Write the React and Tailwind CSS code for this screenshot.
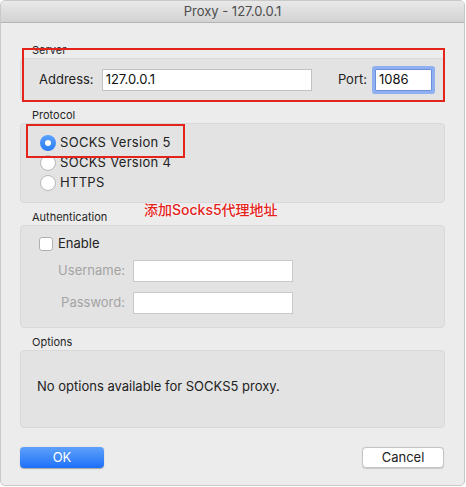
import React from "react";

const font = { fontFamily: "Inter, 'Noto Sans', 'Noto Sans CJK SC', sans-serif" };

const GroupLabel = ({ children }) => (
    <div className="h-[14px] pl-[12px] mb-[1px] text-[11px] leading-[14px] text-[#262626]">{children}</div>
);

const Radio = ({ checked, label }) => (
    <div className="flex items-center h-[20px]">
        {checked ? (
            <span className="w-[16px] h-[16px] rounded-full bg-gradient-to-b from-[#5aa2ff] to-[#2a7cf6] flex items-center justify-center">
                <span className="w-[6px] h-[6px] rounded-full bg-white" />
            </span>
        ) : (
            <span className="w-[16px] h-[16px] rounded-full bg-white border border-[#b8b8b8]" />
        )}
        <span className="ml-[4px] text-[13px] tracking-[0.3px] text-[#222]">{label}</span>
    </div>
);

export default function App() {
    return (
        <div className="w-[466px] h-[487px] bg-white" style={font}>
            <div className="relative w-[465px] h-[486px] bg-[#ececec] rounded-[5px] border border-[#c9c9c9] overflow-hidden flex flex-col">
                <div className="h-[22px] shrink-0 bg-gradient-to-b from-[#e9e9e9] to-[#d2d2d2] border-b border-[#b4b4b4] flex items-center justify-center text-[13px] text-[#4d4d4d]">
                    Proxy - 127.0.0.1
                </div>

                <div className="px-[19px] pt-[20px] flex flex-col">
                    {/* Server */}
                    <GroupLabel>Server</GroupLabel>
                    <div className="h-[43px] bg-[#e3e3e3] border border-[#d9d9d9] rounded-[4px] flex items-center pl-[18px] pr-[12px]">
                        <span className="text-[13px] text-[#222]">Address:</span>
                        <div className="ml-[8px] w-[210px] h-[22px] bg-white border border-[#c2c2c2] flex items-center px-[3px] text-[13px] text-[#111]">127.0.0.1</div>
                        <span className="ml-auto text-[13px] text-[#222]">Port:</span>
                        <div className="ml-[8px] w-[57px] h-[22px] bg-white border border-[#6b8fdc] ring-[3px] ring-[#8fb0f0] rounded-[1px] flex items-center px-[3px] text-[13px] text-[#111]">1086</div>
                    </div>

                    {/* Protocol */}
                    <div className="mt-[7px]">
                        <GroupLabel>Protocol</GroupLabel>
                    </div>
                    <div className="h-[80px] bg-[#e3e3e3] border border-[#d9d9d9] rounded-[4px] pl-[19px] pt-[9px]">
                        <Radio checked label="SOCKS Version 5" />
                        <Radio label="SOCKS Version 4" />
                        <Radio label="HTTPS" />
                    </div>

                    {/* Authentication */}
                    <div className="mt-[7px]">
                        <GroupLabel>Authentication</GroupLabel>
                    </div>
                    <div className="h-[103px] bg-[#e3e3e3] border border-[#d9d9d9] rounded-[4px] pl-[16px] pt-[11px]">
                        <div className="flex items-center h-[14px] ml-[2px]">
                            <span className="w-[14px] h-[14px] bg-white border border-[#b0b0b0] rounded-[3px]" />
                            <span className="ml-[5px] text-[13px] text-[#222]">Enable</span>
                        </div>
                        <div className="mt-[9px] grid grid-cols-[88px_160px] gap-x-[8px] gap-y-[10px] items-center">
                            <span className="text-right text-[13px] text-[#a3a3a3]">Username:</span>
                            <div className="h-[22px] bg-white border border-[#cacaca]" />
                            <span className="text-right text-[13px] text-[#a3a3a3]">Password:</span>
                            <div className="h-[22px] bg-white border border-[#cacaca]" />
                        </div>
                    </div>

                    {/* Options */}
                    <div className="mt-[7px]">
                        <GroupLabel>Options</GroupLabel>
                    </div>
                    <div className="h-[78px] bg-[#e3e3e3] border border-[#d9d9d9] rounded-[4px] pl-[16px] flex items-center pb-[4px]">
                        <span className="text-[13px] text-[#222]">No options available for SOCKS5 proxy.</span>
                    </div>

                    {/* Buttons */}
                    <div className="mt-[19px] flex justify-between pr-[1px]">
                        <button className="w-[84px] h-[21px] rounded-[4px] bg-gradient-to-b from-[#5ea1fb] to-[#1c6ff7] text-white text-[13px] leading-[21px] shadow-[0_0.5px_1px_rgba(0,0,0,0.3)]">OK</button>
                        <button className="w-[82px] h-[21px] rounded-[4px] bg-white border border-[#c4c4c4] text-[#222] text-[13px] leading-[19px] shadow-[0_0.5px_1px_rgba(0,0,0,0.15)]">Cancel</button>
                    </div>
                </div>

                {/* annotations */}
                <div className="absolute left-[21px] top-[47px] w-[423px] h-[54px] border-2 border-[#e4231b]" />
                <div className="absolute left-[25px] top-[123px] w-[159px] h-[34px] border-2 border-[#e4231b]" />
                <div
                    className="absolute left-[143px] top-[200px] text-[14px] leading-[18px] font-medium text-[#e4231b] [text-shadow:0_0_2px_#fff,0_0_2px_#fff]"
                    style={font}
                >
                    添加Socks5代理地址
                </div>
            </div>
        </div>
    );
}
